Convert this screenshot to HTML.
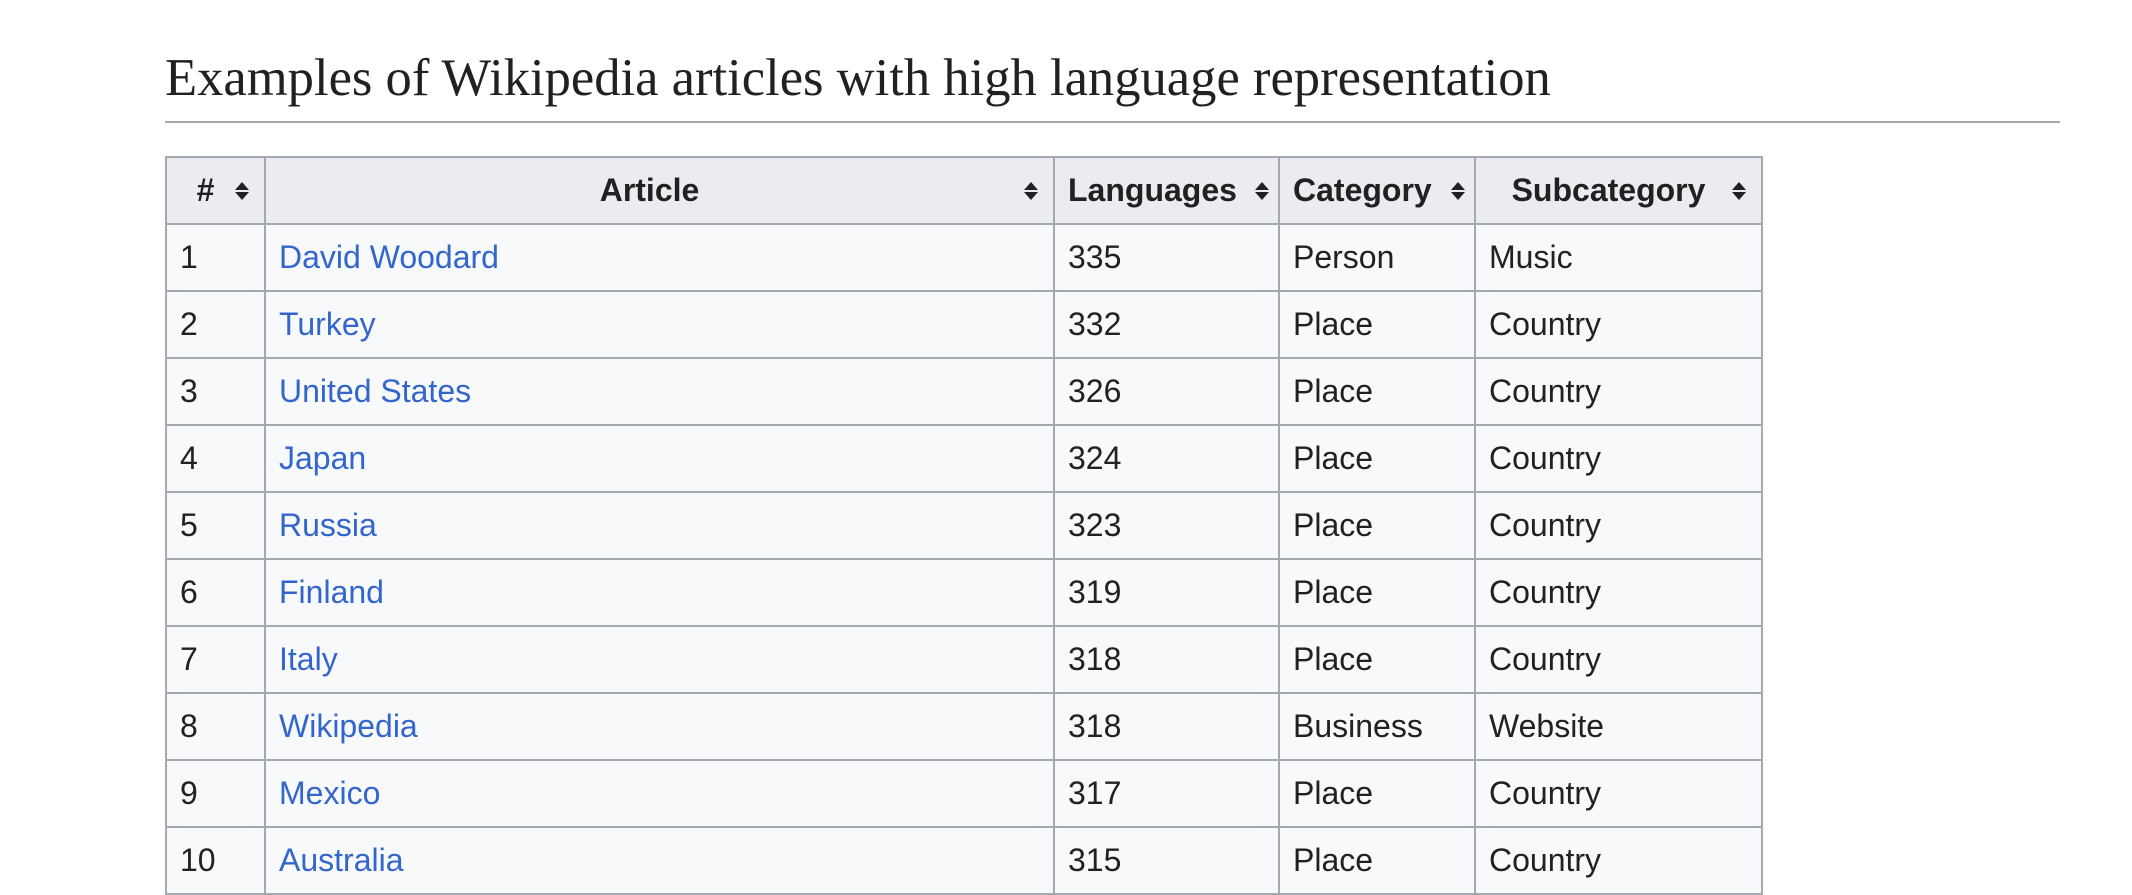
<!DOCTYPE html>
<html><head><meta charset="utf-8"><style>
html,body{margin:0;padding:0;background:#fff;width:2132px;height:884px;overflow:hidden}
h2{position:absolute;left:165px;top:46px;margin:0;font-family:"Liberation Serif",serif;font-weight:normal;font-size:52.6px;line-height:64px;color:#202122;white-space:nowrap}
.hr{position:absolute;left:165px;top:121px;width:1895px;height:2px;background:#a2a9b1}
table{position:absolute;left:165px;top:156px;border-collapse:collapse;table-layout:fixed;font-family:"Liberation Sans",Arial,sans-serif;font-size:32px;color:#202122;background:#f8f9fa}
tr{height:67px}
td,th{border:2px solid #a2a9b1;height:67px;padding:0 0 0 13px;text-align:left;white-space:nowrap;position:relative;box-sizing:border-box}
th{background:#eaecf0;font-weight:bold;text-align:center;padding:0 30px 0 10px}
th.l{text-align:left;padding-left:13px}
a{color:#3366cc;text-decoration:none}
.s{position:absolute;right:14px;top:50%;margin-top:-11px;width:16px;height:22px}
</style></head><body>
<h2>Examples of Wikipedia articles with high language representation</h2>
<div class="hr"></div>
<table>
<colgroup><col style="width:99px"><col style="width:789px"><col style="width:225px"><col style="width:196px"><col style="width:287px"></colgroup>
<tr>
<th>#<svg class="s" viewBox="0 0 16 22"><path d="M8 2L15 10H1z M8 20L15 12H1z" fill="#202122"/></svg></th>
<th>Article<svg class="s" viewBox="0 0 16 22"><path d="M8 2L15 10H1z M8 20L15 12H1z" fill="#202122"/></svg></th>
<th class="l">Languages<svg class="s" style="right:8px" viewBox="0 0 16 22"><path d="M8 2L15 10H1z M8 20L15 12H1z" fill="#202122"/></svg></th>
<th class="l">Category<svg class="s" style="right:8px" viewBox="0 0 16 22"><path d="M8 2L15 10H1z M8 20L15 12H1z" fill="#202122"/></svg></th>
<th>Subcategory<svg class="s" viewBox="0 0 16 22"><path d="M8 2L15 10H1z M8 20L15 12H1z" fill="#202122"/></svg></th>
</tr>
<tr><td>1</td><td><a>David Woodard</a></td><td>335</td><td>Person</td><td>Music</td></tr>
<tr><td>2</td><td><a>Turkey</a></td><td>332</td><td>Place</td><td>Country</td></tr>
<tr><td>3</td><td><a>United States</a></td><td>326</td><td>Place</td><td>Country</td></tr>
<tr><td>4</td><td><a>Japan</a></td><td>324</td><td>Place</td><td>Country</td></tr>
<tr><td>5</td><td><a>Russia</a></td><td>323</td><td>Place</td><td>Country</td></tr>
<tr><td>6</td><td><a>Finland</a></td><td>319</td><td>Place</td><td>Country</td></tr>
<tr><td>7</td><td><a>Italy</a></td><td>318</td><td>Place</td><td>Country</td></tr>
<tr><td>8</td><td><a>Wikipedia</a></td><td>318</td><td>Business</td><td>Website</td></tr>
<tr><td>9</td><td><a>Mexico</a></td><td>317</td><td>Place</td><td>Country</td></tr>
<tr><td>10</td><td><a>Australia</a></td><td>315</td><td>Place</td><td>Country</td></tr>
</table>
</body></html>
